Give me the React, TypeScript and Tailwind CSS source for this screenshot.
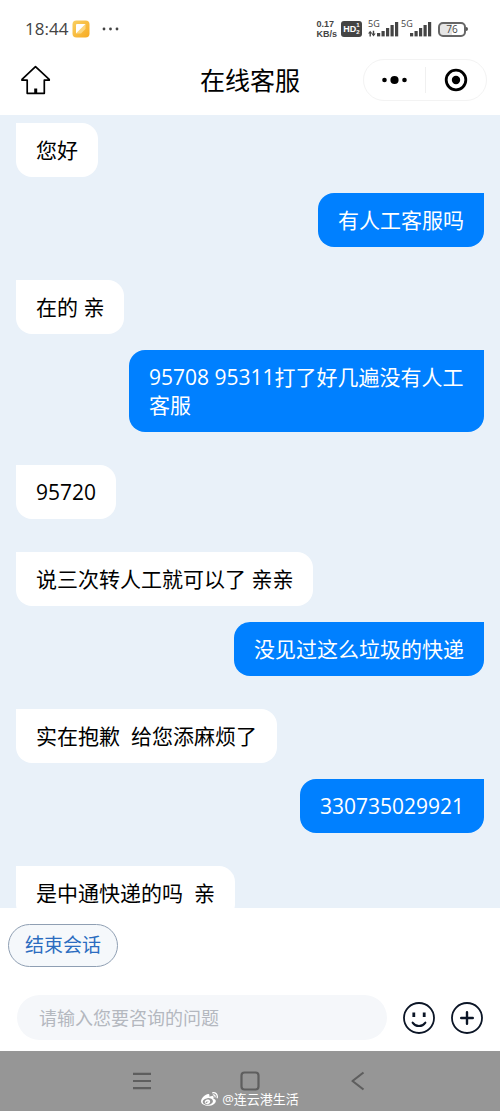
import { FaWeibo } from "react-icons/fa"

interface Message {
  from: "agent" | "user"
  text: string
}

const messages: Message[] = [
  { from: "agent", text: "您好" },
  { from: "user", text: "有人工客服吗" },
  { from: "agent", text: "在的 亲" },
  { from: "user", text: "95708 95311打了好几遍没有人工客服" },
  { from: "agent", text: "95720" },
  { from: "agent", text: "说三次转人工就可以了 亲亲" },
  { from: "user", text: "没见过这么垃圾的快递" },
  { from: "agent", text: "实在抱歉  给您添麻烦了" },
  { from: "user", text: "330735029921" },
  { from: "agent", text: "是中通快递的吗  亲" },
]

export default function App() {
  return (
    <div className="flex h-screen flex-col bg-white font-['Open_Sans','Noto_Sans_CJK_SC',sans-serif] text-black">
      <StatusBar />
      <Header />
      <main className="min-h-0 flex-1 overflow-y-auto bg-[#e9f1f9] px-4 pt-2 [scrollbar-width:none]">
        {messages.map((message, index) => (
          <Bubble key={index} message={message} first={index === 0} />
        ))}
      </main>
      <Composer />
      <SystemNav />
    </div>
  )
}

function StatusBar() {
  return (
    <div className="flex h-[45px] shrink-0 items-center justify-between pt-[13px] pr-8 pl-[25px] text-[#444]">
      <div className="flex items-center">
        <span className="text-[17px] leading-5">18:44</span>
        <svg viewBox="0 0 18 18" className="ml-1 size-[18px]">
          <defs>
            <linearGradient id="note" x1="0" y1="0" x2="1" y2="1">
              <stop offset="0" stopColor="#f8cf62" />
              <stop offset="1" stopColor="#f8aa20" />
            </linearGradient>
          </defs>
          <rect x="0.5" y="0.5" width="17" height="17" rx="4" fill="url(#note)" />
          <path d="M13.5 4v5L9 13.5H4z" fill="#fbd67e" />
          <path d="M4 13.5V5a1 1 0 0 1 1-1h8.5z" fill="#fff" />
        </svg>
        <svg viewBox="0 0 18 4" className="ml-3 h-1 w-[18px]" fill="currentColor">
          <circle cx="2" cy="2" r="1.4" />
          <circle cx="8.5" cy="2" r="1.4" />
          <circle cx="15" cy="2" r="1.4" />
        </svg>
      </div>

      <div className="flex items-center">
        <div className="flex flex-col font-['Liberation_Sans',sans-serif] text-[9px] leading-[10px] font-bold">
          <span>0.17</span>
          <span>KB/s</span>
        </div>
        <div className="ml-1 flex h-4 w-[21px] items-center justify-center rounded-[3px] bg-[#444] font-['Liberation_Sans',sans-serif] text-white">
          <span className="text-[9px] leading-4 font-bold">HD</span>
          <span className="flex flex-col text-[6px] leading-[7px] font-bold">
            <span>1</span>
            <span>2</span>
          </span>
        </div>
        <Signal className="ml-1.5" data />
        <Signal className="ml-0.5" />
        <div className="ml-1.5 flex items-center">
          <div className="flex h-[15px] w-7 items-center justify-center rounded-[5px] border-2 border-[#666] bg-gradient-to-r from-[#e6e6e6] from-50% to-white to-50% text-[10px] leading-3">
            76
          </div>
          <div className="h-1 w-0.5 rounded-r bg-[#555]" />
        </div>
      </div>
    </div>
  )
}

function Signal({ className, data }: { className: string; data?: boolean }) {
  return (
    <div className={`relative h-4 w-[31px] ${className}`}>
      <span className="absolute -top-0.5 left-0 text-[9px] leading-[10px]">5G</span>
      <svg viewBox="0 0 31 16" className="h-4 w-[31px]" fill="currentColor">
        {data && (
          <>
            <path d="M0 12.6 2.2 9.8 4.4 12.6H2.9V15.4H1.5V12.6z" />
            <path d="M4.8 9.8H6.2V12.6H7.7L5.5 15.4 3.3 12.6H4.8z" />
          </>
        )}
        <rect x="9" y="12" width="3.2" height="3.4" />
        <rect x="13.5" y="10" width="3.2" height="5.4" />
        <rect x="18" y="7" width="3.2" height="8.4" />
        <rect x="22.5" y="4" width="3.2" height="11.4" />
        <rect x="27" y="1" width="3.2" height="14.4" />
      </svg>
    </div>
  )
}

function Header() {
  return (
    <header className="grid h-[70px] shrink-0 grid-cols-[1fr_auto_1fr] items-center px-[13px]">
      <button type="button" aria-label="首页" className="ml-2 justify-self-start">
        <svg
          viewBox="0 0 30 30"
          className="size-[30px]"
          fill="none"
          stroke="#000"
          strokeWidth="1.7"
          strokeLinejoin="round"
          strokeLinecap="round"
        >
          <path d="M14.5 1.7 1 14.3v.9h5.2v13.1h17.1V15.2h4.9v-.9z" />
          <path d="M14.7 28v-4.5" strokeWidth="3" strokeLinecap="butt" />
        </svg>
      </button>
      <h1 className="text-[25px] leading-8">在线客服</h1>
      <div className="flex h-[42px] w-[124px] items-center justify-self-end rounded-full border border-[#f3f3f3]">
        <button type="button" aria-label="更多" className="flex flex-1 justify-center">
          <svg viewBox="0 0 26 10" className="h-2.5 w-[26px]">
            <circle cx="3.5" cy="5" r="2.3" />
            <circle cx="13.5" cy="5" r="4.1" />
            <circle cx="23.5" cy="5" r="2.3" />
          </svg>
        </button>
        <div className="h-[26px] w-px bg-[#f0f0f0]" />
        <button type="button" aria-label="关闭" className="flex flex-1 justify-center">
          <svg viewBox="0 0 24 24" className="size-6">
            <circle cx="12" cy="12" r="9.8" fill="none" stroke="#000" strokeWidth="2.8" />
            <circle cx="12" cy="12" r="4.2" />
          </svg>
        </button>
      </div>
    </header>
  )
}

function Bubble({ message, first }: { message: Message; first: boolean }) {
  if (message.from === "user") {
    return (
      <div className="mt-4 flex justify-end">
        <p className="max-w-[355px] rounded-2xl rounded-tr-none bg-[#0080ff] px-5 py-[13px] text-[21px] leading-7 whitespace-pre-wrap text-white">
          {message.text}
        </p>
      </div>
    )
  }

  return (
    <div className={first ? "flex" : "mt-[33px] flex"}>
      <p className="max-w-[355px] rounded-2xl rounded-tl-none bg-white px-5 py-[13px] text-[21px] leading-7 whitespace-pre-wrap">
        {message.text}
      </p>
    </div>
  )
}

function Composer() {
  return (
    <footer className="shrink-0 bg-white pt-4 pb-[11px]">
      <button
        type="button"
        className="ml-2 flex h-[43px] items-center rounded-full border border-[#8f9fb3] bg-[#f5f8fb] px-4 text-[19px] text-[#2b6cc0]"
      >
        结束会话
      </button>
      <div className="mt-7 flex items-center gap-4 px-[17px]">
        <input
          type="text"
          aria-label="咨询的问题"
          placeholder="请输入您要咨询的问题"
          className="h-[45px] min-w-0 flex-1 rounded-full bg-[#f5f7fa] px-[22px] text-[18px] outline-none placeholder:text-[#b4b8bf]"
        />
        <button type="button" aria-label="表情">
          <svg viewBox="0 0 32 32" className="size-8" fill="none" stroke="#0b1526" strokeLinecap="round">
            <circle cx="16" cy="16" r="15" strokeWidth="1.8" />
            <path d="M10.8 10.6v4.4M21.2 10.6v4.4" strokeWidth="2.8" strokeLinecap="butt" />
            <path d="M9.6 20.6c3.2 4.6 9.6 4.6 12.8 0" strokeWidth="2" />
          </svg>
        </button>
        <button type="button" aria-label="添加">
          <svg viewBox="0 0 32 32" className="size-8" fill="none" stroke="#0b1526" strokeLinecap="round">
            <circle cx="16" cy="16" r="15" strokeWidth="1.8" />
            <path d="M16 10.2v11.6M10.2 16h11.6" strokeWidth="2.4" />
          </svg>
        </button>
      </div>
    </footer>
  )
}

function SystemNav() {
  return (
    <nav className="relative flex h-[60px] shrink-0 items-center justify-center gap-[88px] bg-[#969696]">
      <button type="button" aria-label="最近任务">
        <svg viewBox="0 0 20 20" className="size-5" fill="none" stroke="#5e5e5e" strokeWidth="2.2">
          <path d="M1 2.8h18M1 10h18M1 17.2h18" />
        </svg>
      </button>
      <button type="button" aria-label="主屏幕">
        <svg viewBox="0 0 20 20" className="size-5" fill="none" stroke="#5e5e5e" strokeWidth="2.2">
          <rect x="1.5" y="1.5" width="17" height="17" rx="3" />
        </svg>
      </button>
      <button type="button" aria-label="返回">
        <svg viewBox="0 0 20 20" className="size-5" fill="none" stroke="#5e5e5e" strokeWidth="2.2">
          <path d="M15.5 1.5 4.5 10l11 8.5" strokeLinejoin="round" />
        </svg>
      </button>

      {/* Weibo watermark */}
      <div className="absolute inset-x-0 bottom-0 flex items-center justify-center gap-1 text-[13px] leading-6 text-white">
        <FaWeibo className="size-[17px]" />
        <span>@连云港生活</span>
      </div>
    </nav>
  )
}
